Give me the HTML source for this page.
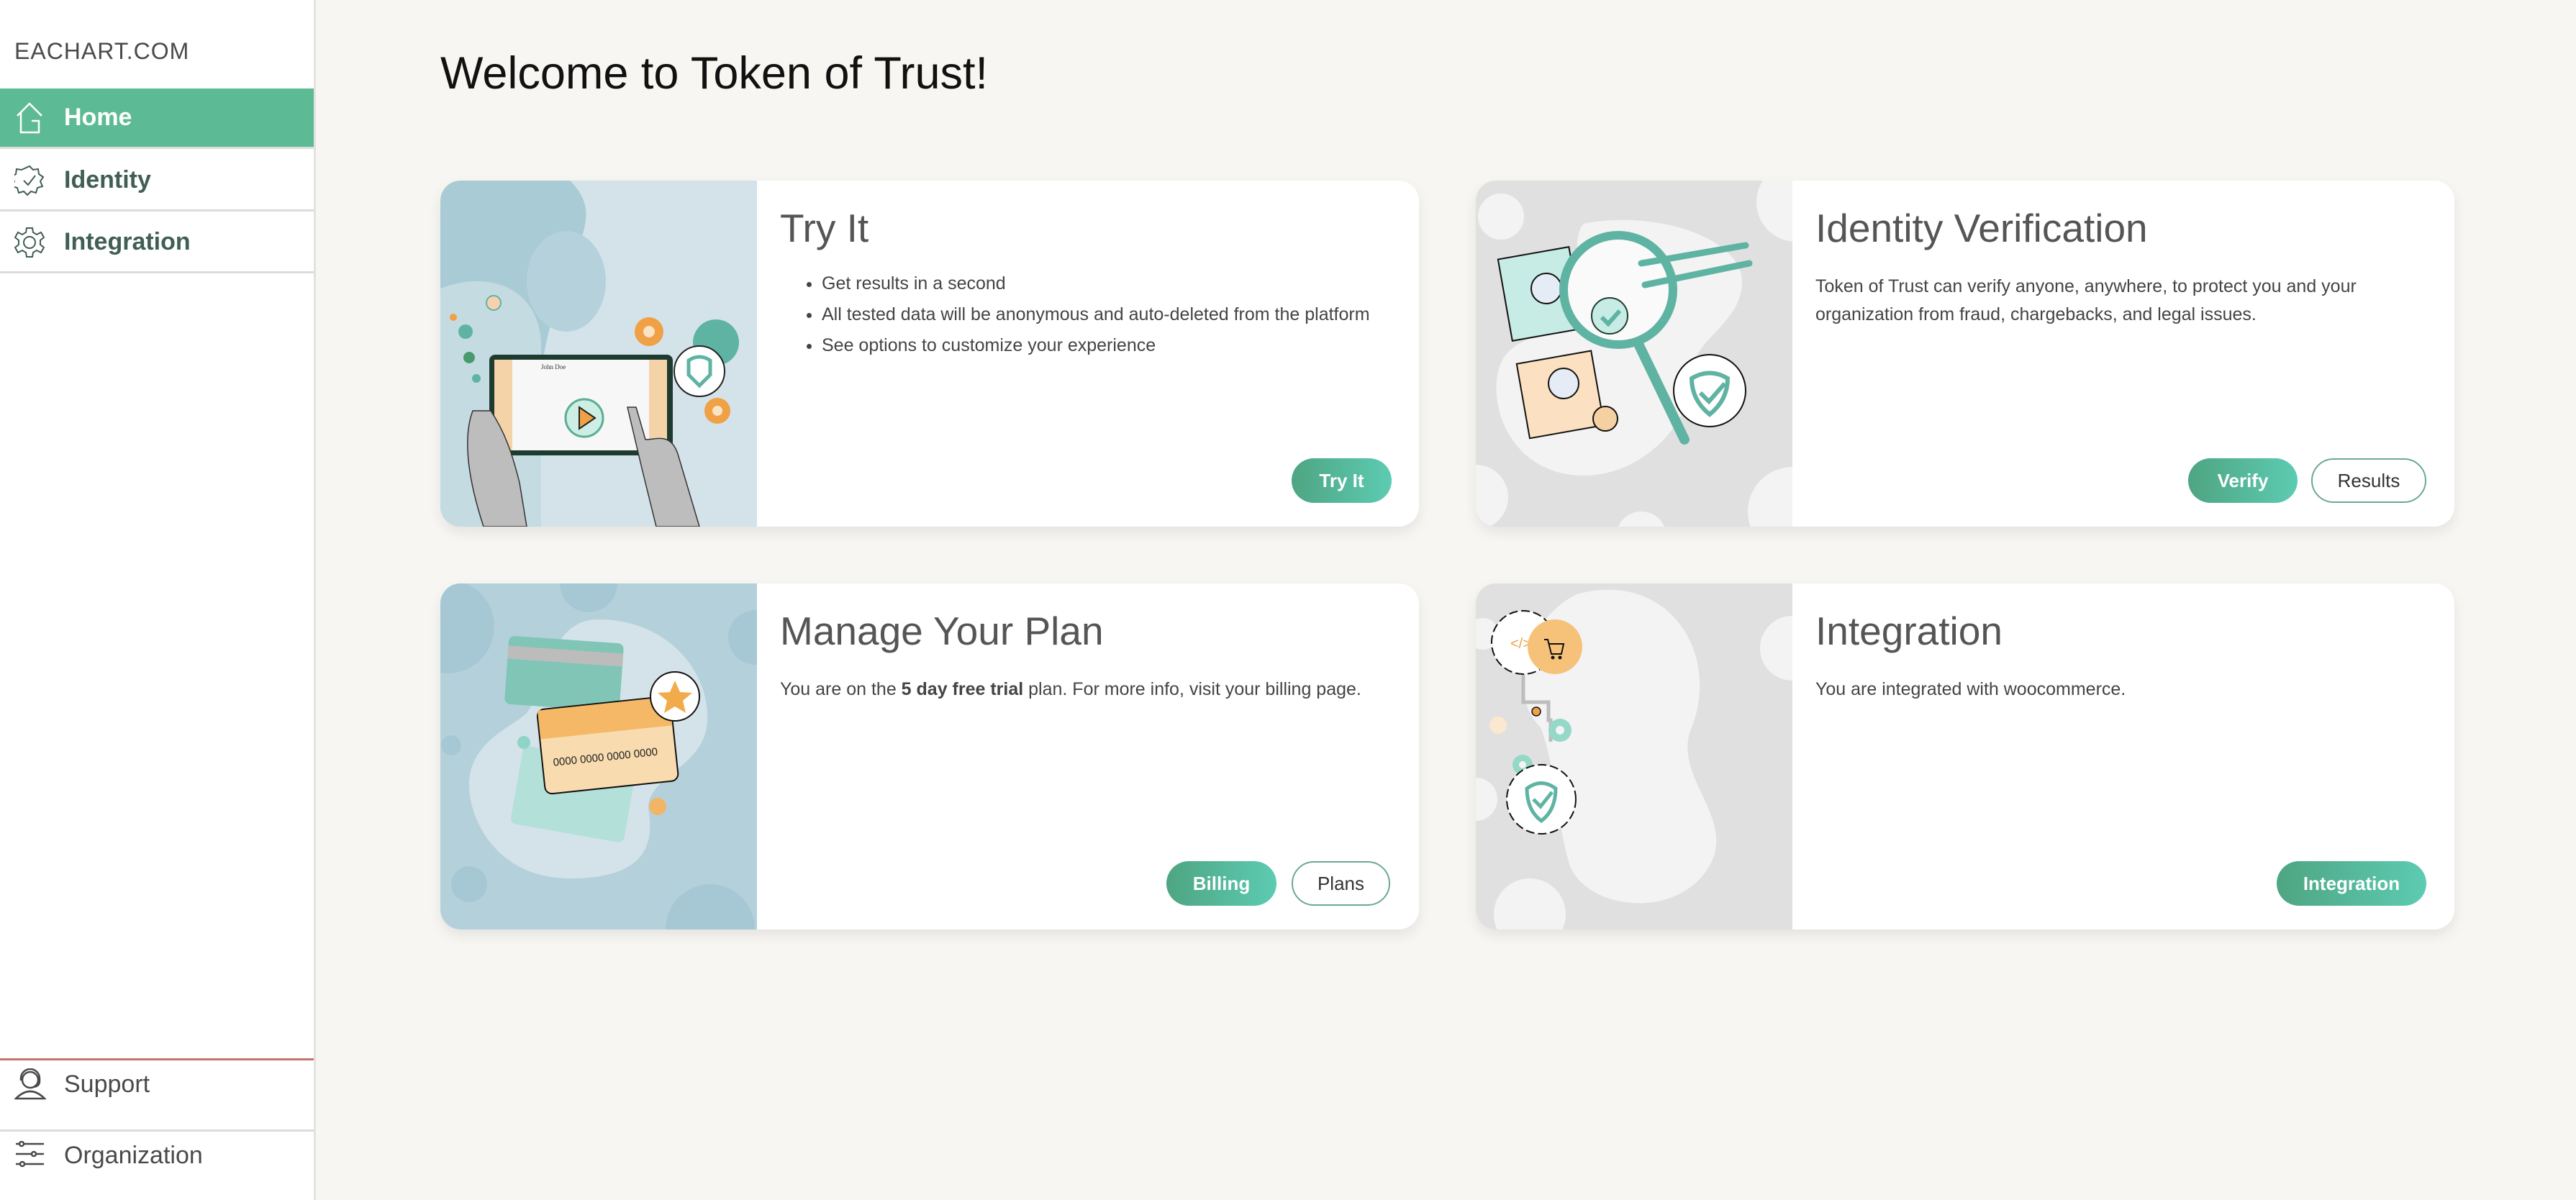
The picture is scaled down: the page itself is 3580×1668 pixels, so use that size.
<!DOCTYPE html>
<html><head><meta charset="utf-8">
<style>
*{box-sizing:border-box;margin:0;padding:0}
body{width:3580px;height:1668px;background:#f7f6f2;font-family:"Liberation Sans",sans-serif;position:relative;overflow:hidden}
.side{position:absolute;left:0;top:0;width:439px;height:1668px;background:#fff;border-right:3px solid #e2e2e2}
.brand{position:absolute;left:20px;top:53px;font-size:32px;color:#4a4a4a;letter-spacing:1px}
.nav{position:absolute;left:0;width:436px;height:84px;border-bottom:3px solid #dcdcdc;display:flex;align-items:center}
.nav span{position:absolute;left:89px;font-size:34px;font-weight:bold;color:#405e54}
.nav svg{position:absolute;left:20px}
.nav.act{background:#5cbb94}
.nav.act span{color:#fff}
.bot{position:absolute;left:0;width:436px;display:flex;align-items:center}
.bot span{position:absolute;left:89px;font-size:34px;color:#4a4a4a}
.bot svg{position:absolute;left:20px}
h1{position:absolute;left:612px;top:66px;font-size:63px;font-weight:normal;color:#111}
.card{position:absolute;width:1360px;height:481px;background:#fff;border-radius:28px;overflow:hidden;box-shadow:0 8px 18px rgba(0,0,0,.08)}
.card svg.il{position:absolute;left:0;top:0;width:440px;height:481px}
.card h2{position:absolute;left:472px;top:34px;font-size:55px;font-weight:normal;color:#555}
.card p,.card li{font-size:25px;color:#444;line-height:39px}
.card ul{position:absolute;left:530px;top:124px}
.card ul li{margin-bottom:4px}
.card p{position:absolute;left:472px;top:128px;width:820px}
.btn{position:absolute;top:386px;height:62px;border-radius:31px;font-size:26px;font-weight:bold;color:#fff;display:flex;align-items:center;justify-content:center;background:linear-gradient(90deg,#4ea582,#5dcbb2)}
.btn.o{background:#fff;color:#333;font-weight:normal;border:2px solid #6aa994}
</style></head><body>
<div class="side">
<div class="brand">EACHART.COM</div>
<div class="nav act" style="top:123px"><svg width="42" height="46" viewBox="0 0 42 46"><path d="M4 20 L21 3 L38 20 M9 15 V43 H34 V27 H24" fill="none" stroke="#fff" stroke-width="2.5"/></svg><span>Home</span></div>
<div class="nav" style="top:210px"><svg width="42" height="44" viewBox="0 0 42 44"><path d="M21 2 l5 5 7-1 1 7 6 4-4 6 3 7-7 2-2 7-7-2-5 5-5-5-7 2-2-7-7-2 3-7-4-6 6-4 1-7 7 1z" fill="none" stroke="#405e54" stroke-width="2"/><path d="M13 22 l6 6 10-13" fill="none" stroke="#405e54" stroke-width="2"/></svg><span>Identity</span></div>
<div class="nav" style="top:296px"><svg width="42" height="44" viewBox="0 0 42 44"><path d="M17 2h8l1 6 5 3 6-3 4 7-5 4v6l5 4-4 7-6-3-5 3-1 6h-8l-1-6-5-3-6 3-4-7 5-4v-6l-5-4 4-7 6 3 5-3z" fill="none" stroke="#405e54" stroke-width="2"/><circle cx="21" cy="22" r="8" fill="none" stroke="#405e54" stroke-width="2"/></svg><span>Integration</span></div>
<div style="position:absolute;left:0;top:1471px;width:436px;height:3px;background:#c7746c"></div>
<div class="bot" style="top:1474px;height:66px"><svg width="44" height="44" viewBox="0 0 44 44"><circle cx="22" cy="16" r="11" fill="none" stroke="#4a4a4a" stroke-width="2.5"/><path d="M9 17v-3a13 13 0 0 1 26 0v4 M35 18 q0 7-9 8" fill="none" stroke="#4a4a4a" stroke-width="2.5"/><path d="M2 42 q20-20 40 0z" fill="none" stroke="#4a4a4a" stroke-width="2.5"/></svg><span>Support</span></div>
<div style="position:absolute;left:0;top:1570px;width:436px;height:3px;background:#dcdcdc"></div>
<div class="bot" style="top:1573px;height:66px"><svg width="44" height="40" viewBox="0 0 44 40"><path d="M2 4h5 M13 4h28 M2 18h22 M30 18h11 M2 32h6 M14 32h27" stroke="#4a4a4a" stroke-width="2.5"/><circle cx="10" cy="4" r="3" fill="none" stroke="#4a4a4a" stroke-width="2.5"/><circle cx="27" cy="18" r="3" fill="none" stroke="#4a4a4a" stroke-width="2.5"/><circle cx="11" cy="32" r="3" fill="none" stroke="#4a4a4a" stroke-width="2.5"/></svg><span>Organization</span></div>
</div>

<h1>Welcome to Token of Trust!</h1>

<div class="card" style="left:612px;top:251px">
<svg class="il" viewBox="0 0 440 481"><rect width="440" height="481" fill="#a9cbd6"/><path d="M180 0 H440 V481 H80 C160 400 110 300 170 150 C200 70 220 40 180 0Z" fill="#d3e3e9"/><ellipse cx="175" cy="140" rx="55" ry="70" fill="#b5d2dc"/><path d="M0 150 C80 120 140 160 140 230 V481 H0Z" fill="#c4dbe2"/>
<rect x="68" y="242" width="255" height="140" rx="8" fill="#1e3b2f"/><rect x="75" y="249" width="240" height="126" fill="#f5d3a8"/><rect x="100" y="249" width="190" height="126" fill="#f7f7f7"/>
<text x="140" y="262" font-size="9" font-family="Liberation Serif" fill="#333">John Doe</text>
<circle cx="200" cy="330" r="26" fill="#cdeee4" stroke="#5aae92" stroke-width="3"/><path d="M193 315 L215 330 L193 345Z" fill="#f0a045" stroke="#222" stroke-width="2"/>
<path d="M45 320 C30 360 40 420 60 481 H120 L110 420 C100 380 90 350 70 320Z" fill="#bdbdbd" stroke="#333" stroke-width="1.5"/>
<path d="M260 315 L280 400 L300 481 H360 L330 380 C320 350 300 360 285 360 L272 315Z" fill="#bdbdbd" stroke="#333" stroke-width="1.5"/>
<circle cx="290" cy="210" r="20" fill="#f0a045"/><circle cx="290" cy="210" r="8" fill="#fbe3c5"/>
<circle cx="383" cy="225" r="32" fill="#5fb3a2"/>
<circle cx="360" cy="265" r="35" fill="#fff" stroke="#222" stroke-width="2"/><path d="M345 250 q15-10 30 0 v20 l-15 15 -15-15z" fill="none" stroke="#5fb3a2" stroke-width="5"/>
<circle cx="385" cy="320" r="18" fill="#f0a045"/><circle cx="385" cy="320" r="7" fill="#fbe3c5"/>
<circle cx="35" cy="210" r="10" fill="#5fb3a2"/><circle cx="18" cy="190" r="5" fill="#f0a045"/><circle cx="40" cy="246" r="8" fill="#4a9a6e"/><circle cx="50" cy="275" r="6" fill="#5fb3a2"/><circle cx="74" cy="170" r="10" fill="#f7d1ad" stroke="#5fb3a2" stroke-width="2"/></svg>
<h2>Try It</h2>
<ul><li>Get results in a second</li><li>All tested data will be anonymous and auto-deleted from the platform</li><li>See options to customize your experience</li></ul>
<div class="btn" style="left:1183px;width:139px">Try It</div>
</div>

<div class="card" style="left:2051px;top:251px">
<svg class="il" viewBox="0 0 440 481"><rect width="440" height="481" fill="#e0e0e0"/><circle cx="35" cy="50" r="32" fill="#f3f3f3"/><circle cx="445" cy="30" r="55" fill="#f3f3f3"/><circle cx="0" cy="440" r="45" fill="#f3f3f3"/><circle cx="230" cy="495" r="35" fill="#f3f3f3"/><circle cx="440" cy="460" r="62" fill="#f3f3f3"/>
<path d="M150 60 C250 40 370 80 370 140 C370 200 300 220 300 270 C300 340 230 410 150 410 C60 410 20 330 30 270 C40 220 80 220 140 200 C150 150 130 80 150 60Z" fill="#f3f3f3"/>
<rect x="40" y="100" width="100" height="115" fill="#c7ece5" stroke="#111" stroke-width="2" transform="rotate(-10 90 157)"/><circle cx="98" cy="150" r="21" fill="#e5ecf6" stroke="#111" stroke-width="2"/>
<rect x="65" y="245" width="105" height="105" fill="#fbe0c2" stroke="#111" stroke-width="2" transform="rotate(-10 117 297)"/><circle cx="122" cy="282" r="21" fill="#e5ecf6" stroke="#111" stroke-width="2"/><circle cx="180" cy="331" r="17" fill="#f5d0a0" stroke="#111" stroke-width="2"/>
<path d="M225 225 L290 360" stroke="#5fb3a2" stroke-width="14" stroke-linecap="round"/>
<circle cx="198" cy="152" r="76" fill="#fafafa" stroke="#5fb3a2" stroke-width="12"/><circle cx="186" cy="188" r="25" fill="#c7ece5" stroke="#1e3b2f" stroke-width="2"/><path d="M175 190 l9 9 16-18" fill="none" stroke="#5fb3a2" stroke-width="6"/>
<path d="M230 115 L375 90 M235 145 L380 115" stroke="#5fb3a2" stroke-width="9" stroke-linecap="round"/>
<circle cx="325" cy="292" r="50" fill="#fff" stroke="#111" stroke-width="2"/><path d="M300 275 q25-15 50 0 q0 30-25 50 q-25-20-25-50z" fill="none" stroke="#5fb3a2" stroke-width="6"/><path d="M312 295 l12 12 22-25" fill="none" stroke="#5fb3a2" stroke-width="6"/></svg>
<h2>Identity Verification</h2>
<p>Token of Trust can verify anyone, anywhere, to protect you and your organization from fraud, chargebacks, and legal issues.</p>
<div class="btn" style="left:990px;width:152px">Verify</div>
<div class="btn o" style="left:1161px;width:160px">Results</div>
</div>

<div class="card" style="left:612px;top:811px">
<svg class="il" viewBox="0 0 440 481"><rect width="440" height="481" fill="#b4d1db"/><circle cx="10" cy="60" r="65" fill="#a6c8d4"/><circle cx="206" cy="0" r="40" fill="#a6c8d4"/><circle cx="438" cy="75" r="38" fill="#a6c8d4"/><circle cx="40" cy="418" r="25" fill="#a6c8d4"/><circle cx="375" cy="480" r="62" fill="#a6c8d4"/><circle cx="15" cy="225" r="14" fill="#a6c8d4"/>
<path d="M220 50 C320 50 380 130 370 200 C360 260 280 270 290 320 C300 390 250 410 180 410 C80 410 40 330 40 280 C40 220 100 200 120 180 C150 140 150 50 220 50Z" fill="#d4e3e9"/>
<rect x="92" y="78" width="160" height="95" rx="8" fill="#80c5b6" transform="rotate(4 172 125)"/><rect x="92" y="92" width="160" height="18" fill="#bcbcbc" transform="rotate(4 172 125)"/>
<rect x="105" y="238" width="160" height="110" rx="8" fill="#b4e0da" transform="rotate(10 185 293)"/>
<g transform="rotate(-6 240 228)"><rect x="140" y="165" width="186" height="118" rx="10" fill="#f8dcb0" stroke="#111" stroke-width="2"/><rect x="141" y="166" width="184" height="40" fill="#f5b866"/><text x="155" y="245" font-size="15" fill="#222">0000 0000 0000 0000</text></g>
<circle cx="326" cy="157" r="34" fill="#fff" stroke="#111" stroke-width="2"/><path d="M326 135 l7 16 17 1-13 11 4 17-15-9-15 9 4-17-13-11 17-1z" fill="#f2ab4b"/><circle cx="302" cy="310" r="12" fill="#f2b566"/><circle cx="116" cy="221" r="9" fill="#8fd4c6"/></svg>
<h2>Manage Your Plan</h2>
<p>You are on the <b>5 day free trial</b> plan. For more info, visit your billing page.</p>
<div class="btn" style="left:1009px;width:153px">Billing</div>
<div class="btn o" style="left:1183px;width:137px">Plans</div>
</div>

<div class="card" style="left:2051px;top:811px">
<svg class="il" viewBox="0 0 440 481"><rect width="440" height="481" fill="#e0e0e0"/><path d="M140 15 C270 -20 340 100 300 200 C270 270 370 330 320 400 C270 470 150 450 130 390 C110 320 110 250 90 200 C40 150 70 50 140 15Z" fill="#f3f3f3"/><circle cx="10" cy="70" r="22" fill="#f3f3f3"/><circle cx="0" cy="300" r="30" fill="#f3f3f3"/><circle cx="75" cy="460" r="50" fill="#f3f3f3"/><circle cx="440" cy="90" r="45" fill="#f3f3f3"/>
<path d="M66 110 v55 h35 v25 h3 v30" fill="none" stroke="#bdbdbd" stroke-width="5"/><circle cx="84" cy="178" r="6" fill="#f0a045" stroke="#111" stroke-width="1.5"/>
<circle cx="66" cy="82" r="44" fill="#fff" stroke="#111" stroke-width="2" stroke-dasharray="12 5"/><text x="48" y="90" font-size="20" fill="#f0a045">&lt;/&gt;</text>
<circle cx="110" cy="88" r="38" fill="#f6c27a"/><path d="M95 78h5l5 20h14l3-14h-20" fill="none" stroke="#111" stroke-width="2"/><circle cx="107" cy="103" r="2.5" fill="#111"/><circle cx="117" cy="103" r="2.5" fill="#111"/>
<circle cx="117" cy="204" r="16" fill="#95d8c8"/><circle cx="117" cy="204" r="6" fill="#f3f3f3"/><circle cx="65" cy="252" r="14" fill="#95d8c8"/><circle cx="65" cy="252" r="5" fill="#f3f3f3"/>
<circle cx="91" cy="300" r="48" fill="#fff" stroke="#111" stroke-width="2" stroke-dasharray="12 5"/><path d="M71 285 q20-15 40 0 q0 30-20 45 q-20-15-20-45z" fill="none" stroke="#5fb3a2" stroke-width="5"/><path d="M80 300 l10 10 16-20" fill="none" stroke="#5fb3a2" stroke-width="5"/><circle cx="31" cy="197" r="12" fill="#fbe8d1"/></svg>
<h2>Integration</h2>
<p>You are integrated with woocommerce.</p>
<div class="btn" style="left:1113px;width:208px">Integration</div>
</div>
</body></html>
